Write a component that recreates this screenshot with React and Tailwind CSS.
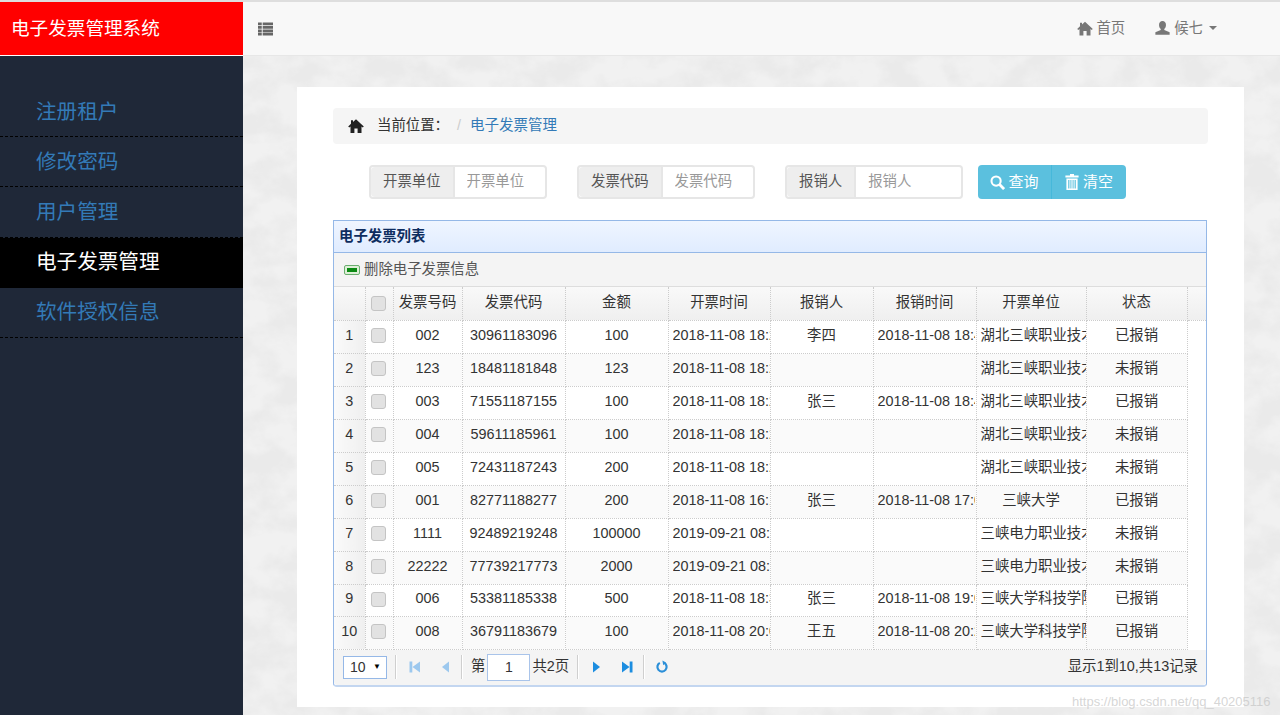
import React from "react";

const FONT = "[font-family:'Liberation_Sans','Noto_Sans_CJK_SC',sans-serif]";

const menu = ["注册租户", "修改密码", "用户管理", "电子发票管理", "软件授权信息"];

const columns = [
  { title: "发票号码", w: "w-[69px]" },
  { title: "发票代码", w: "w-[103px]" },
  { title: "金额", w: "w-[103px]" },
  { title: "开票时间", w: "w-[102px]" },
  { title: "报销人", w: "w-[103px]" },
  { title: "报销时间", w: "w-[103px]" },
  { title: "开票单位", w: "w-[110px]" },
  { title: "状态", w: "w-[101px]" },
];

const HB = "湖北三峡职业技术学院";
const DL = "三峡电力职业技术学院";
const KJ = "三峡大学科技学院";

const rows = [
  ["002", "30961183096", "100", "2018-11-08 18:20:11", "李四", "2018-11-08 18:40:21", HB, "已报销"],
  ["123", "18481181848", "123", "2018-11-08 18:20:32", "", "", HB, "未报销"],
  ["003", "71551187155", "100", "2018-11-08 18:21:02", "张三", "2018-11-08 18:41:10", HB, "已报销"],
  ["004", "59611185961", "100", "2018-11-08 18:21:30", "", "", HB, "未报销"],
  ["005", "72431187243", "200", "2018-11-08 18:22:05", "", "", HB, "未报销"],
  ["001", "82771188277", "200", "2018-11-08 16:10:45", "张三", "2018-11-08 17:02:33", "三峡大学", "已报销"],
  ["1111", "92489219248", "100000", "2019-09-21 08:12:09", "", "", DL, "未报销"],
  ["22222", "77739217773", "2000", "2019-09-21 08:15:40", "", "", DL, "未报销"],
  ["006", "53381185338", "500", "2018-11-08 18:30:18", "张三", "2018-11-08 19:05:27", KJ, "已报销"],
  ["008", "36791183679", "100", "2018-11-08 20:01:52", "王五", "2018-11-08 20:22:14", KJ, "已报销"],
];

function HomeIcon({ className }) {
  return (
    <svg viewBox="0 0 16 16" className={className} fill="currentColor">
      <path d="M8 1.2 15.8 8.4 14.7 9.5 13.5 8.4V15H9.6V10.6H6.4V15H2.5V8.4L1.3 9.5.2 8.4 3 5.8V2.2H5V4Z" />
    </svg>
  );
}

function UserIcon({ className }) {
  return (
    <svg viewBox="0 0 16 16" className={className} fill="currentColor">
      <path d="M8 .6C10.4.6 11.7 2.4 11.7 4.8 11.7 6.7 10.9 8.3 9.9 9.1V10.2L15.6 12.6V15.2H.4V12.6L6.1 10.2V9.1C5.1 8.3 4.3 6.7 4.3 4.8 4.3 2.4 5.6.6 8 .6Z" />
    </svg>
  );
}

function ListIcon({ className }) {
  return (
    <svg viewBox="0 0 16 14" className={className} fill="currentColor">
      <path d="M0 0h4v3H0zM5 0h11v3H5zM0 3.7h4v3H0zM5 3.7h11v3H5zM0 7.4h4v3H0zM5 7.4h11v3H5zM0 11h4v3H0zM5 11h11v3H5z" />
    </svg>
  );
}

function SearchIcon({ className }) {
  return (
    <svg viewBox="0 0 16 16" className={className} fill="none" stroke="currentColor">
      <circle cx="6.5" cy="6.5" r="4.9" strokeWidth="2.2" />
      <path d="M10.2 10.2 15 15" strokeWidth="3" />
    </svg>
  );
}

function TrashIcon({ className }) {
  return (
    <svg viewBox="0 0 14 16" className={className} fill="currentColor">
      <path d="M5 0h4v1.4h4.6V3.4H.4V1.4H5ZM1.4 4.4h11.2V16H1.4ZM3.2 6V14.4H4.4V6ZM5.4 6V14.4H6.4V6ZM7.6 6V14.4H8.6V6ZM9.6 6V14.4H10.8V6Z" fillRule="evenodd" />
    </svg>
  );
}

function PagerIcon({ type, className }) {
  const d = {
    first: "M1.5 1.5h2.8v11H1.5ZM12 1.5v11L4.5 7Z",
    prev: "M10 1.5v11L3 7Z",
    next: "M4 1.5v11L11 7Z",
    last: "M12.5 1.5h-2.8v11h2.8ZM2 1.5v11L9.5 7Z",
  }[type];
  return (
    <svg viewBox="0 0 14 14" className={className} fill="currentColor">
      <path d={d} />
    </svg>
  );
}

function Marble() {
  return (
    <svg className="absolute inset-0 h-full w-full" aria-hidden="true">
      <filter id="marble" x="0" y="0" width="100%" height="100%">
        <feTurbulence type="fractalNoise" baseFrequency="0.028 0.036" numOctaves="5" seed="8" />
        <feColorMatrix
          type="matrix"
          values="0 0 0 0 0.82  0 0 0 0 0.82  0 0 0 0 0.82  3 0 0 0 -1.05"
        />
      </filter>
      <rect width="100%" height="100%" fill="#f1f1f1" />
      <rect width="100%" height="100%" filter="url(#marble)" />
    </svg>
  );
}

function SearchField({ label, className }) {
  return (
    <div className={`flex h-[34px] w-[178px] rounded border-2 border-[#e6e6e6] text-[14.4px] ${className || ""}`}>
      <span className="flex items-center justify-center whitespace-nowrap rounded-l-sm border-r-2 border-[#e6e6e6] bg-[#eeeeee] px-[12px] text-[#555]">
        {label}
      </span>
      <input
        placeholder={label}
        className="w-0 min-w-0 flex-1 rounded-r-sm bg-white pl-[12px] outline-none placeholder:text-[#999]"
      />
    </div>
  );
}

function Checkbox() {
  return <div className="ml-[5px] h-[15px] w-[15px] rounded-[3px] border border-[#c4c4c4] bg-[#e2e2e2]" />;
}

function Separator() {
  return <div className="mx-[5px] h-[24px] w-[2px] border-l border-r border-l-[#cfcfcf] border-r-white" />;
}

function InvoiceTable() {
  return (
    <table className="w-full table-fixed border-collapse">
      <thead>
        <tr className="h-[33px] bg-gradient-to-b from-[#f9f9f9] to-[#efefef] text-[14.4px] text-[#333]">
          <th className="w-[31px] border-r border-b border-dotted border-[#ccc] font-normal" />
          <th className="w-[28px] border-r border-b border-dotted border-[#ccc] font-normal">
            <Checkbox />
          </th>
          {columns.map((c) => (
            <th key={c.title} className={`${c.w} border-r border-b border-dotted border-[#ccc] font-normal`}>
              {c.title}
            </th>
          ))}
          <th className="border-b border-dotted border-[#ccc]" />
        </tr>
      </thead>
      <tbody>
        {rows.map((r, i) => (
          <tr key={r[0]} className={`${i === 8 ? "h-[32px]" : "h-[33px]"} text-[#333]`}>
            <td className="border-r border-b border-dotted border-[#ccc] bg-gradient-to-r from-[#fafafa] to-[#efefef] pb-[2px] text-center text-[14.4px]">
              {i + 1}
            </td>
            <td className={`border-r border-b border-dotted border-[#ccc] pb-[2px] ${i % 2 ? "bg-[#fafafa]" : "bg-white"}`}>
              <Checkbox />
            </td>
            {r.map((v, j) => {
              const isDate = j === 3 || j === 5;
              const isUnit = j === 6 && v.length > 4;
              return (
                <td
                  key={j}
                  className={`overflow-hidden whitespace-nowrap border-r border-b border-dotted border-[#ccc] pb-[2px] text-[14.4px] ${
                    isDate || isUnit ? "pl-[4px] text-left" : "text-center"
                  } ${i % 2 ? "bg-[#fafafa]" : "bg-white"}`}
                >
                  {isDate ? <div className="w-[97px] overflow-hidden">{v}</div> : v}
                </td>
              );
            })}
            <td />
          </tr>
        ))}
      </tbody>
    </table>
  );
}

function Pager() {
  return (
    <div className="flex h-[35px] items-center rounded-b bg-[#f4f4f4] pl-[9px] pr-[8px] text-[14.4px] text-[#333]">
      <div className="flex h-[23px] w-[44px] items-center justify-between border border-[#95b8e7] bg-white pl-[6px] pr-[5px] text-[14px]">
        10
        <span className="text-[8px] text-black">▼</span>
      </div>
      <div className="ml-[3px]"><Separator /></div>
      <PagerIcon type="first" className="ml-[6px] h-[14px] w-[14px] text-[#9cc8ee]" />
      <PagerIcon type="prev" className="ml-[17px] h-[14px] w-[14px] text-[#9cc8ee]" />
      <div className="ml-[3px]"><Separator /></div>
      <span className="ml-[3px]">第</span>
      <div className="mx-[2px] flex h-[27px] w-[43px] items-center justify-center border border-[#a9c4ea] bg-white text-[14px]">1</div>
      <span>共2页</span>
      <div className="ml-[3px]"><Separator /></div>
      <PagerIcon type="next" className="ml-[5px] h-[14px] w-[14px] text-[#1c8de0]" />
      <PagerIcon type="last" className="ml-[17px] h-[14px] w-[14px] text-[#1c8de0]" />
      <div className="ml-[4px]"><Separator /></div>
      <svg viewBox="0 0 14 14" className="ml-[5px] h-[14px] w-[14px] text-[#2b8fd8]" fill="none" stroke="currentColor">
        <path d="M9.2 2.9A4.6 4.6 0 1 1 4.8 2.9" strokeWidth="2.2" />
        <path d="M7.4.6 11 2.4 8.2 5.2Z" fill="currentColor" stroke="none" />
      </svg>
      <span className="ml-auto text-[#333]">显示1到10,共13记录</span>
    </div>
  );
}

export default function App() {
  return (
    <div className={`relative flex h-[715px] w-[1280px] flex-col overflow-hidden bg-white ${FONT}`}>
      <div className="h-[2px] shrink-0 bg-[#dedede]" />
      <div className="flex min-h-0 flex-1">
        <aside className="flex w-[243px] shrink-0 flex-col bg-[#1f2838]">
          <div className="flex h-[54px] items-center border-b border-white bg-[#ff0000] pl-[11px] text-[18.6px] text-white">
            电子发票管理系统
          </div>
          <nav className="pt-[31px]">
            {menu.map((m, i) => (
              <div
                key={m}
                className={`flex h-[50.2px] items-center border-b border-dashed border-black pl-[36px] pt-[1px] text-[20.6px] ${
                  i === 3 ? "bg-black text-white" : "text-[#337ab7]"
                }`}
              >
                {m}
              </div>
            ))}
          </nav>
        </aside>

        <main className="relative flex min-w-0 flex-1 flex-col">
          <Marble />
          <header className="relative flex h-[54px] shrink-0 items-center border-b border-[#e7e7e7] bg-[#f8f8f8] pl-[15px] text-[14.4px] text-[#777]">
            <ListIcon className="h-[14px] w-[15px] text-[#666]" />
            <div className="ml-auto flex items-center pr-[63px]">
              <HomeIcon className="mr-[3px] h-[17px] w-[16px]" />
              <span>首页</span>
              <UserIcon className="ml-[30px] mr-[4px] h-[16px] w-[15px]" />
              <span>候七</span>
              <span className="ml-[6px] h-0 w-0 border-x-[4px] border-t-[4px] border-x-transparent border-t-[#777]" />
            </div>
          </header>

          <div className="relative ml-[54px] mr-[36px] mt-[31px] h-[620px] bg-white pl-[36px] pr-[36px] pt-[21px]">
            <div className="flex h-[36px] items-center rounded bg-[#f5f5f5] pl-[15px] text-[14.4px] text-[#333]">
              <HomeIcon className="h-[16px] w-[16px] text-[#222]" />
              <span className="ml-[13px]">当前位置：</span>
              <span className="ml-[8px] text-[#ccc]">/</span>
              <span className="ml-[9px] text-[14.5px] text-[#337ab7]">电子发票管理</span>
            </div>

            <div className="mt-[21px] flex pl-[36px]">
              <SearchField label="开票单位" />
              <SearchField label="发票代码" className="ml-[30px]" />
              <SearchField label="报销人" className="ml-[30px]" />
              <div className="ml-[15px] flex h-[34px] w-[148px] rounded bg-[#5bc0de] text-[15px] text-white">
                <div className="flex w-[74px] items-center justify-center border-r border-[#46b8da]">
                  <SearchIcon className="mr-[3px] h-[15px] w-[15px]" />
                  查询
                </div>
                <div className="flex flex-1 items-center justify-center">
                  <TrashIcon className="mr-[4px] h-[16px] w-[14px]" />
                  清空
                </div>
              </div>
            </div>

            <section className="mt-[21px] w-[874px] rounded-b border border-[#95b8e7] border-b-2 border-b-[#c3d6f0]">
              <div className="flex h-[32px] items-center border-b border-[#95b8e7] bg-gradient-to-b from-[#eff5ff] to-[#e0ecff] pl-[5px] pt-[1px] text-[14.4px] font-bold text-[#0e2d5f]">
                电子发票列表
              </div>
              <div className="flex h-[34px] items-center border-b border-[#ddd] bg-[#f4f4f4] pl-[10px] text-[14.4px] text-[#555]">
                <div className="mr-[4px] flex h-[10px] w-[16px] items-center justify-center rounded-[2px] border border-[#6cae70] bg-[#dff0d8]">
                  <div className="h-[4px] w-[10px] bg-[#0b8a13]" />
                </div>
                删除电子发票信息
              </div>
              <InvoiceTable />
              <Pager />
            </section>
          </div>
        </main>
      </div>
      <div className="absolute left-[1072px] top-[692px] text-[13px] text-[#c4c4c4]/70">
        https://blog.csdn.net/qq_40205116
      </div>
    </div>
  );
}
